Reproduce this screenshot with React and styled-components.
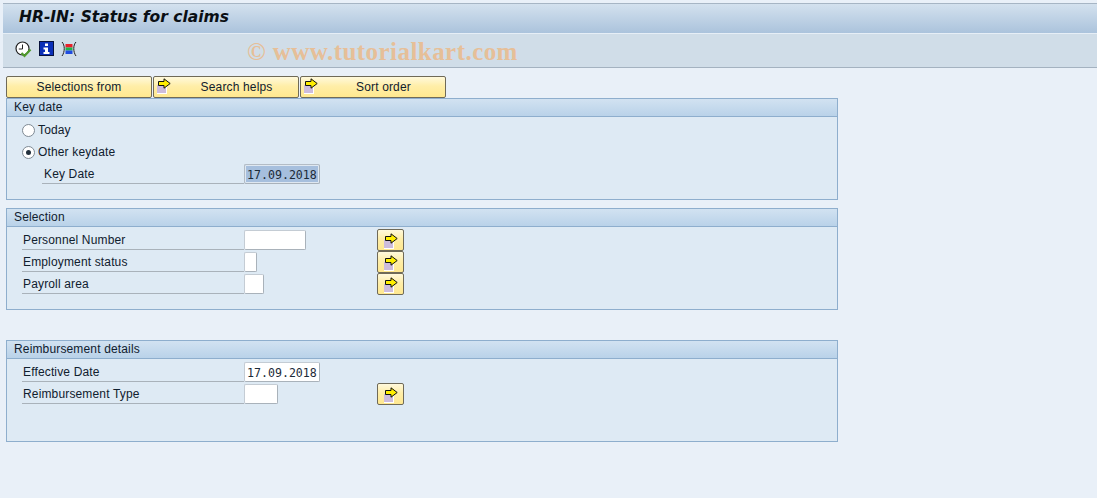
import styled, { createGlobalStyle } from "styled-components";

const GlobalStyle = createGlobalStyle`
    html, body {
        margin: 0;
        padding: 0;
        background: #e9f0f8;
    }
    body {
        font-family: "Liberation Sans", Arial, sans-serif;
        font-size: 12px;
        color: #10202e;
    }
`;

function ArrowIcon() {
    return (
        <svg width="16" height="16" viewBox="0 0 16 16">
            <rect x="1" y="7" width="10" height="9" fill="#fff" />
            <rect x="1" y="7" width="9" height="8" fill="#cdbcdc" />
            <path d="M2.5 3.5H8V0.8L14.2 5.5L8 10.2V7.5H2.5Z" fill="#ffee00" stroke="#111" strokeWidth="1" />
        </svg>
    );
}

function ClockIcon() {
    return (
        <svg width="17" height="17" viewBox="0 0 17 17">
            <circle cx="7.5" cy="7.5" r="6.5" fill="#fff" stroke="#222" strokeWidth="1.2" />
            <path d="M7.5 3.5V8H3.8" fill="none" stroke="#222" strokeWidth="1" />
            <path d="M6.5 12L9.5 15L15.5 8.5" fill="none" stroke="#4f9a2c" strokeWidth="2.2" />
        </svg>
    );
}

function InfoIcon() {
    return (
        <svg width="15" height="15" viewBox="0 0 15 15">
            <rect x="0.5" y="0.5" width="14" height="14" fill="#0a2fb8" stroke="#06113c" />
            <rect x="6" y="2.5" width="3" height="2.5" fill="#fff" />
            <path d="M4.5 6.5H9V11H10.5V13H4.5V11H6V8.5H4.5Z" fill="#fff" />
        </svg>
    );
}

function LayoutIcon() {
    return (
        <svg width="16" height="16" viewBox="0 0 16 16">
            <path d="M1 1C4 4 4 11 1 15M15 1C12 4 12 11 15 15" fill="none" stroke="#222" strokeWidth="1" />
            <rect x="4.5" y="3" width="7" height="3.5" fill="#e8202a" />
            <rect x="4.5" y="6.5" width="7" height="3" fill="#22b14c" />
            <rect x="4.5" y="9.5" width="7" height="3.5" fill="#1f4be0" />
        </svg>
    );
}

function Row({ label, indent, width, value, disabled, action }) {
    return (
        <FieldRow>
            <Label $indent={indent}>{label}</Label>
            <Input $width={width} $disabled={disabled} value={value || ""} readOnly />
            {action && <ActionButton><ArrowIcon /></ActionButton>}
        </FieldRow>
    );
}

export default function App() {
    return (
        <Page>
            <GlobalStyle />
            <TitleBar>HR-IN: Status for claims</TitleBar>
            <Toolbar>
                <ClockIcon />
                <InfoIcon />
                <LayoutIcon />
                <Watermark>© www.tutorialkart.com</Watermark>
            </Toolbar>

            <Content>
                <ButtonRow>
                    <TopButton>Selections from</TopButton>
                    <TopButton $icon><ArrowIcon /><span>Search helps</span></TopButton>
                    <TopButton $icon><ArrowIcon /><span>Sort order</span></TopButton>
                </ButtonRow>

                <Panel>
                    <PanelHeader>Key date</PanelHeader>
                    <PanelBody>
                        <RadioRow><Radio />Today</RadioRow>
                        <RadioRow><Radio $checked />Other keydate</RadioRow>
                        <Row label="Key Date" indent width={76} value="17.09.2018" disabled />
                    </PanelBody>
                </Panel>

                <Panel $top={8}>
                    <PanelHeader>Selection</PanelHeader>
                    <PanelBody>
                        <Row label="Personnel Number" width={62} action />
                        <Row label="Employment status" width={13} action />
                        <Row label="Payroll area" width={20} action />
                    </PanelBody>
                </Panel>

                <Panel $top={30}>
                    <PanelHeader>Reimbursement details</PanelHeader>
                    <PanelBody>
                        <Row label="Effective Date" width={76} value="17.09.2018" />
                        <Row label="Reimbursement Type" width={34} action />
                    </PanelBody>
                </Panel>
            </Content>
        </Page>
    );
}

const Page = styled.div`
    height: 498px;
    padding: 3px 0 0 3px;
    box-sizing: border-box;
    overflow: hidden;
    background: #e9f0f8;
`;

const TitleBar = styled.div`
    height: 31px;
    box-sizing: border-box;
    padding: 3px 0 0 16px;
    border-top: 1px solid #a6b5c4;
    border-bottom: 1px solid #e6eef6;
    background: linear-gradient(#d3e1ee, #abc3dc);
    font-family: "DejaVu Sans", Verdana, sans-serif;
    font-size: 15.5px;
    font-weight: 700;
    font-style: italic;
    line-height: 20px;
    color: #0a0f14;
`;

const Toolbar = styled.div`
    position: relative;
    height: 34px;
    box-sizing: border-box;
    padding: 7px 0 0 12px;
    display: flex;
    align-items: flex-start;
    gap: 7px;
    background: #d0dde8;
    border-bottom: 1px solid #a4b2c0;

    svg {
        flex: none;
    }
`;

const Watermark = styled.div`
    position: absolute;
    left: 244px;
    top: 4px;
    font-family: "Liberation Serif", serif;
    font-size: 25px;
    font-weight: 700;
    line-height: 28px;
    letter-spacing: 0.45px;
    color: #e6bf98;
    white-space: nowrap;
`;

const Content = styled.div`
    width: 832px;
    padding: 8px 0 0 3px;
`;

const ButtonRow = styled.div`
    display: flex;
    gap: 1px;
    height: 22px;
`;

const TopButton = styled.button`
    position: relative;
    width: 146px;
    height: 22px;
    padding: 0 0 1px ${p => (p.$icon ? 21 : 0)}px;
    box-sizing: border-box;
    border: 1px solid #6f6a58;
    border-radius: 2px;
    background: linear-gradient(#fff9dc, #ffeea8 45%, #ffe88f);
    font-family: "Liberation Sans", Arial, sans-serif;
    font-size: 12px;
    color: #10202e;
    letter-spacing: 0.15px;

    svg {
        position: absolute;
        left: 2px;
        top: 1px;
    }
`;

const Panel = styled.section`
    margin-top: ${p => p.$top || 0}px;
    height: 102px;
    box-sizing: border-box;
    border: 1px solid #8eaecd;
    background: #deeaf4;
`;

const PanelHeader = styled.div`
    height: 18px;
    box-sizing: border-box;
    padding-left: 7px;
    border-bottom: 1px solid #8eaecd;
    background: linear-gradient(#d2e2f1, #b9d2e9);
    font-size: 12px;
    line-height: 17px;
    letter-spacing: 0.15px;
    color: #10202e;
`;

const PanelBody = styled.div`
    padding: 2px 0 0 15px;
`;

const FieldRow = styled.div`
    display: flex;
    height: 22px;
`;

const Label = styled.div`
    width: ${p => (p.$indent ? 202 : 222)}px;
    margin-left: ${p => (p.$indent ? 20 : 0)}px;
    height: 21px;
    flex: none;
    box-sizing: border-box;
    padding: 2px 0 0 ${p => (p.$indent ? 2 : 1)}px;
    border-bottom: 1px solid #a9b2ba;
    line-height: 18px;
    letter-spacing: 0.15px;
`;

const Input = styled.input`
    width: ${p => p.$width}px;
    height: 20px;
    margin-top: 1px;
    padding: 1px 0 0 2px;
    box-sizing: border-box;
    flex: none;
    border: 1px solid ${p => (p.$disabled ? "#b3bcc5" : "#c4ccd4")};
    border-bottom-color: #a9b2ba;
    border-right-color: #a9b2ba;
    border-radius: 2px;
    outline: none;
    background: ${p => (p.$disabled ? "#a6bfdd" : "#fff")};
    box-shadow: ${p => (p.$disabled ? "inset 0 0 0 1px #dfe8f1" : "none")};
    font-family: "DejaVu Sans Mono", "Liberation Mono", monospace;
    font-size: 11.6px;
    color: #1c2a38;
`;

const ActionButton = styled.button`
    position: absolute;
    left: 377px;
    width: 27px;
    height: 22px;
    padding: 0;
    box-sizing: border-box;
    border: 1px solid #6f6a58;
    border-radius: 2px;
    background: linear-gradient(#fff9dc, #ffeea8 45%, #ffe88f);

    svg {
        display: block;
        margin: 1px 0 0 5px;
    }
`;

const RadioRow = styled.div`
    display: flex;
    align-items: center;
    height: 22px;
    letter-spacing: 0.15px;
`;

const Radio = styled.span`
    position: relative;
    width: 13px;
    height: 13px;
    margin-right: 3px;
    box-sizing: border-box;
    border: 1px solid #7f8a94;
    border-radius: 50%;
    background: #fff;

    &::after {
        content: "";
        display: ${p => (p.$checked ? "block" : "none")};
        position: absolute;
        left: 3px;
        top: 3px;
        width: 5px;
        height: 5px;
        border-radius: 50%;
        background: #22303c;
    }
`;
